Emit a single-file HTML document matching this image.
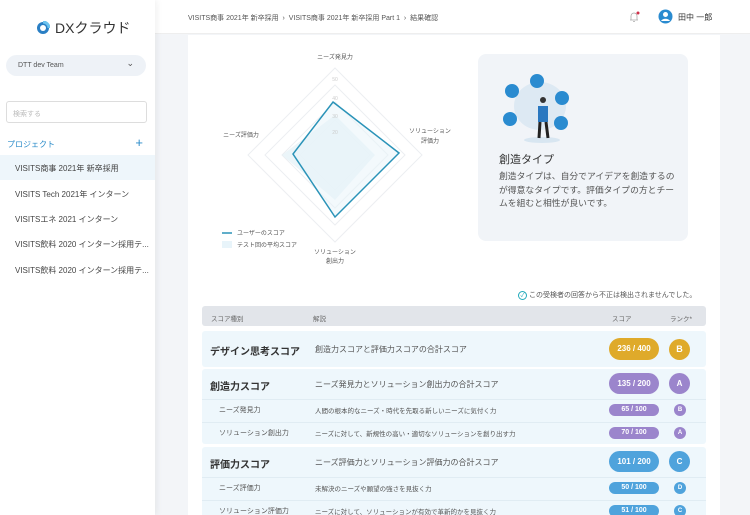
<!DOCTYPE html>
<html><head><meta charset="utf-8"><style>
*{box-sizing:border-box;margin:0;padding:0}
html,body{width:750px;height:515px;overflow:hidden}
body{background:#f3f5f8;font-family:"Liberation Sans","Noto Sans CJK JP",sans-serif;color:#333;position:relative}
.side{position:absolute;left:0;top:0;width:155px;height:515px;background:#fff;box-shadow:2px 0 6px rgba(0,0,0,.06);z-index:2}
.logo{position:absolute;left:36px;top:18px;font-size:14px;color:#333;display:flex;align-items:center;gap:5px}
.team{position:absolute;left:6px;top:55px;width:140px;height:21px;border-radius:11px;background:#eef2f7;font-size:7px;color:#555;padding:7px 0 0 12px}
.team:after{content:"⌄";position:absolute;right:12px;top:3px;font-size:9px}
.search{position:absolute;left:6px;top:101px;width:141px;height:22px;border:1px solid #ddd;border-radius:3px;font-size:7px;color:#bbb;padding:7px 0 0 6px}
.proj{position:absolute;left:7px;top:139px;font-size:8px;color:#2a8bc9;width:140px}
.proj span{position:absolute;right:4px;top:-4px;font-size:13px}
.item{position:absolute;left:0;width:155px;height:25px;font-size:8px;color:#444;padding:8px 0 0 15px;white-space:nowrap}
.hdr{position:absolute;left:155px;top:0;width:595px;height:34px;background:#fff;border-bottom:1px solid #eee}
.crumb{position:absolute;left:33px;top:13px;font-size:7px;color:#555}
.main{position:absolute;left:188px;top:35px;width:532px;height:480px;background:#fff}
.card{position:absolute;left:478px;top:54px;width:210px;height:187px;background:#f1f4f8;border-radius:8px}
.th{position:absolute;left:202px;top:306px;width:504px;height:20px;background:#e2e5ea;border-radius:3px;font-size:6.5px;color:#666}
.th span,.r span{position:absolute}
.grp{position:absolute;left:202px;width:504px;background:#eef7fc;border-radius:3px}
.r{position:absolute;left:0;width:504px}
.pill{position:absolute;color:#fff;text-align:center;border-radius:12px;font-weight:bold}
.rk{position:absolute;color:#fff;text-align:center;border-radius:50%;font-weight:bold}
</style></head><body>
<div class="side">
<div class="logo"><svg width="14" height="14" viewBox="0 0 14 14"><circle cx="7" cy="7" r="6" fill="#2a7fc4"/><circle cx="7" cy="7" r="3" fill="#fff"/><path d="M7 1A6 6 0 0 1 13 7" stroke="#6cc3ee" stroke-width="3" fill="none"/></svg>DXクラウド</div>
<div class="team">DTT dev Team</div>
<div class="search">検索する</div>
<div class="proj">プロジェクト<span>+</span></div>
<div class="item" style="top:155px;background:#eef6fb">VISITS商事 2021年 新卒採用</div>
<div class="item" style="top:181px">VISITS Tech 2021年 インターン</div>
<div class="item" style="top:206px">VISITSエネ 2021 インターン</div>
<div class="item" style="top:231px">VISITS飲料 2020 インターン採用テ...</div>
<div class="item" style="top:257px">VISITS飲料 2020 インターン採用テ...</div>
</div>
<div class="hdr"><div class="crumb">VISITS商事 2021年 新卒採用 &nbsp;›&nbsp; VISITS商事 2021年 新卒採用 Part 1 &nbsp;›&nbsp; 結果確認</div>
<svg style="position:absolute;left:473px;top:11px" width="12" height="12" viewBox="0 0 12 12"><path d="M3 9V5a3 3 0 0 1 6 0v4H2h8M5 10.5h2" stroke="#aaa" fill="none" stroke-width=".8"/><circle cx="10" cy="2" r="1.5" fill="#d0304a"/></svg>
<svg style="position:absolute;left:503px;top:9px" width="15" height="15" viewBox="0 0 15 15"><circle cx="7.5" cy="7.5" r="7" fill="#2a8bd0"/><circle cx="7.5" cy="5.5" r="2.5" fill="#fff"/><path d="M3 12a5 4 0 0 1 9 0" fill="#fff"/></svg>
<div style="position:absolute;left:523px;top:12px;font-size:8px">田中 一郎</div></div>
<div class="main"></div>
<svg style="position:absolute;left:200px;top:40px" width="280" height="230" viewBox="200 40 280 230">
<g fill="none" stroke="#eceef1" stroke-width="1"><path d="M335 68L422 155L335 242L248 155Z"/><path d="M335 85L405 155L335 225L265 155Z"/><path d="M335 102L388 155L335 208L282 155Z"/><path d="M335 120L370 155L335 190L300 155Z"/></g>
<path d="M335 115L375 155L335 200L282 155Z" fill="#e6f2f8" opacity=".8"/>
<path d="M333 102L399 153L335 217L293 154Z" fill="#e8f4fa" fill-opacity=".5" stroke="#2a93b8" stroke-width="1.5"/>
<g font-size="6" fill="#555" text-anchor="middle"><text x="335" y="59">ニーズ発見力</text><text x="430" y="133">ソリューション</text><text x="430" y="143">評価力</text><text x="241" y="137">ニーズ評価力</text><text x="335" y="254">ソリューション</text><text x="335" y="263">創出力</text></g>
<g font-size="5" fill="#ccc" text-anchor="middle"><text x="335" y="81">50</text><text x="335" y="100">40</text><text x="335" y="118">30</text><text x="335" y="134">20</text></g>
<path d="M222 233h10" stroke="#2a93b8" stroke-width="1.5"/><rect x="222" y="241" width="10" height="7" fill="#e8f4fa"/>
<g font-size="6" fill="#555"><text x="237" y="235">ユーザーのスコア</text><text x="237" y="247">テスト回の平均スコア</text></g>
</svg>
<div class="card">
<svg style="position:absolute;left:22px;top:12px" width="80" height="80" viewBox="0 0 80 80"><ellipse cx="40" cy="40" rx="26" ry="24" fill="#dde9f3"/><ellipse cx="42" cy="74" rx="18" ry="3" fill="#d8e6f1"/><g fill="#2a8bd0"><circle cx="12" cy="25" r="7"/><circle cx="37" cy="15" r="7"/><circle cx="62" cy="32" r="7"/><circle cx="10" cy="53" r="7"/><circle cx="61" cy="57" r="7"/></g><circle cx="43" cy="34" r="3" fill="#333"/><path d="M38 40h10v16h-10z" fill="#2a78c0"/><path d="M40 56l-1 16M46 56l2 16" stroke="#222" stroke-width="3"/></svg>
<div style="position:absolute;left:21px;top:97px;font-size:11px;color:#333">創造タイプ</div>
<div style="position:absolute;left:21px;top:116px;width:182px;font-size:8.8px;line-height:13.5px;color:#555">創造タイプは、自分でアイデアを創造するのが得意なタイプです。評価タイプの方とチームを組むと相性が良いです。</div>
</div>
<div style="position:absolute;left:518px;top:290px;font-size:7px;color:#555"><span style="color:#2ab;border:1px solid #2ab;border-radius:50%;display:inline-block;width:9px;height:9px;font-size:6px;text-align:center;line-height:8px">✓</span> この受検者の回答から不正は検出されませんでした。</div>
<div class="th"><span style="left:9px;top:7px">スコア種別</span><span style="left:111px;top:7px">解説</span><span style="left:410px;top:7px">スコア</span><span style="left:468px;top:7px">ランク*</span></div>
<div class="grp" style="top:331px;height:36px"><div class="r" style="top:0"><span style="left:8px;top:12px;font-size:10px;font-weight:bold">デザイン思考スコア</span><span style="left:113px;top:13px;font-size:8px;color:#555">創造力スコアと評価力スコアの合計スコア</span><div class="pill" style="left:407px;top:7px;width:50px;height:22px;background:#dfaa2a;font-size:8px;line-height:22px">236 / 400</div><div class="rk" style="left:467px;top:8px;width:21px;height:21px;background:#dfaa2a;font-size:9px;line-height:21px">B</div></div></div>
<div class="grp" style="top:369px;height:75px"><div class="r" style="top:0"><span style="left:8px;top:9px;font-size:10px;font-weight:bold">創造力スコア</span><span style="left:113px;top:10px;font-size:8px;color:#555">ニーズ発見力とソリューション創出力の合計スコア</span><div class="pill" style="left:407px;top:4px;width:50px;height:21px;background:#9b85cc;font-size:8px;line-height:21px">135 / 200</div><div class="rk" style="left:467px;top:4px;width:21px;height:21px;background:#9b85cc;font-size:8px;line-height:21px">A</div></div>
<div class="r" style="top:30px;border-top:1px solid #e0ecf3"><span style="left:17px;top:5px;font-size:7px;color:#555">ニーズ発見力</span><span style="left:113px;top:5px;font-size:6.5px;color:#555">人間の根本的なニーズ・時代を先取る新しいニーズに気付く力</span><div class="pill" style="left:407px;top:4px;width:50px;height:12px;background:#9b85cc;font-size:7px;line-height:12px">65 / 100</div><div class="rk" style="left:472px;top:4px;width:12px;height:12px;background:#9b85cc;font-size:6px;line-height:12px">B</div></div>
<div class="r" style="top:53px;border-top:1px solid #e0ecf3"><span style="left:17px;top:5px;font-size:7px;color:#555">ソリューション創出力</span><span style="left:113px;top:5px;font-size:6.5px;color:#555">ニーズに対して、新規性の高い・適切なソリューションを創り出す力</span><div class="pill" style="left:407px;top:4px;width:50px;height:12px;background:#9b85cc;font-size:7px;line-height:12px">70 / 100</div><div class="rk" style="left:472px;top:4px;width:12px;height:12px;background:#9b85cc;font-size:6px;line-height:12px">A</div></div></div>
<div class="grp" style="top:447px;height:75px"><div class="r" style="top:0"><span style="left:8px;top:9px;font-size:10px;font-weight:bold">評価力スコア</span><span style="left:113px;top:10px;font-size:8px;color:#555">ニーズ評価力とソリューション評価力の合計スコア</span><div class="pill" style="left:407px;top:4px;width:50px;height:21px;background:#4fa3dc;font-size:8px;line-height:21px">101 / 200</div><div class="rk" style="left:467px;top:4px;width:21px;height:21px;background:#4fa3dc;font-size:8px;line-height:21px">C</div></div>
<div class="r" style="top:30px;border-top:1px solid #e0ecf3"><span style="left:17px;top:5px;font-size:7px;color:#555">ニーズ評価力</span><span style="left:113px;top:5px;font-size:6.5px;color:#555">未解決のニーズや願望の強さを見抜く力</span><div class="pill" style="left:407px;top:4px;width:50px;height:12px;background:#4fa3dc;font-size:7px;line-height:12px">50 / 100</div><div class="rk" style="left:472px;top:4px;width:12px;height:12px;background:#4fa3dc;font-size:6px;line-height:12px">D</div></div>
<div class="r" style="top:53px;border-top:1px solid #e0ecf3"><span style="left:17px;top:5px;font-size:7px;color:#555">ソリューション評価力</span><span style="left:113px;top:5px;font-size:6.5px;color:#555">ニーズに対して、ソリューションが有効で革新的かを見抜く力</span><div class="pill" style="left:407px;top:4px;width:50px;height:12px;background:#4fa3dc;font-size:7px;line-height:12px">51 / 100</div><div class="rk" style="left:472px;top:4px;width:12px;height:12px;background:#4fa3dc;font-size:6px;line-height:12px">C</div></div></div>
</body></html>
